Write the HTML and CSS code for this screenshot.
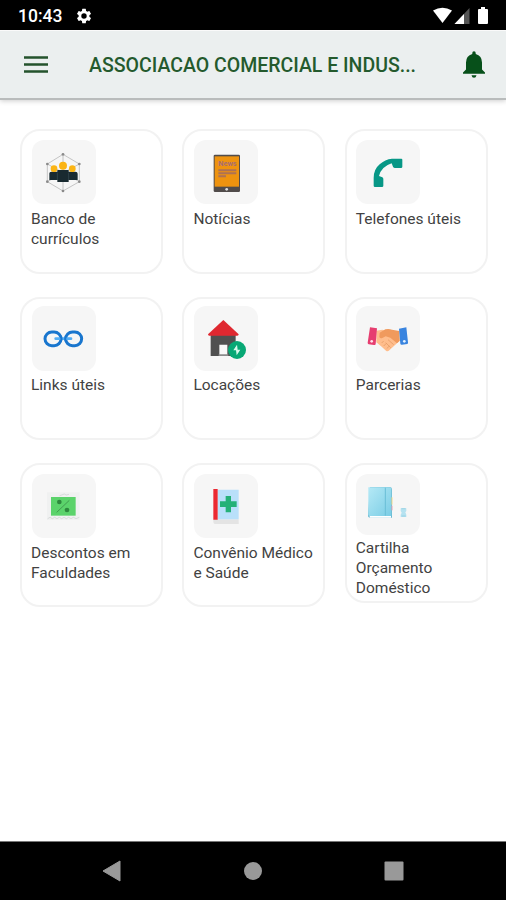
FILE: index.html
```html
<!DOCTYPE html>
<html lang="pt-BR">
<head>
  <meta charset="UTF-8" />
  <title>Associação Comercial</title>
  <meta name="viewport" content="width=device-width, initial-scale=1" />
  <link rel="stylesheet" href="styles.css">
</head>
<body>
  <div class="status-bar">
    <span class="clock">10:43</span>
    <svg class="gear" viewBox="0 0 24 24"><path fill="#fff" d="M19.14 12.94c.04-.3.06-.61.06-.94s-.02-.64-.07-.94l2.03-1.58a.49.49 0 0 0 .12-.61l-1.92-3.32a.49.49 0 0 0-.59-.22l-2.39.96a7 7 0 0 0-1.62-.94l-.36-2.54a.48.48 0 0 0-.48-.41h-3.84a.47.47 0 0 0-.47.41l-.36 2.54c-.59.24-1.13.57-1.62.94l-2.39-.96a.48.48 0 0 0-.59.22L2.74 8.87a.47.47 0 0 0 .12.61l2.03 1.58a7.8 7.8 0 0 0 0 1.88l-2.03 1.58a.49.49 0 0 0-.12.61l1.92 3.32c.12.22.37.29.59.22l2.39-.96c.5.38 1.03.7 1.62.94l.36 2.54c.05.24.24.41.48.41h3.84c.24 0 .44-.17.47-.41l.36-2.54a7 7 0 0 0 1.62-.94l2.39.96c.22.08.47 0 .59-.22l1.92-3.32a.47.47 0 0 0-.12-.61zM12 15.6a3.6 3.6 0 1 1 0-7.2 3.6 3.6 0 0 1 0 7.2z"/></svg>
    <svg class="signals" viewBox="0 0 60 18">
      <path fill="#fff" d="M1 3.500Q10.500-2 20 3.500L10.500 16z"/>
      <path fill="#555" d="M37.500 1v16H22.500z"/>
      <path fill="#fff" d="M32 7v10h-9.500z"/>
      <path fill="#fff" d="M49 0h4v2h2q1 0 1 1v13q0 1-1 1h-8q-1 0-1-1V3q0-1 1-1h2z"/>
    </svg>
  </div>

  <header class="header">
    <svg class="menu" viewBox="0 0 24 18"><path stroke="#24532c" stroke-width="2.500" d="M0 1.500h24M0 8.500h24M0 15.500h24"/></svg>
    <h1>ASSOCIACAO COMERCIAL E INDUS...</h1>
    <svg class="bell" viewBox="0 0 22 27"><path fill="#07501a" d="M9.300 3V2Q9.300.3 11 .3T12.700 2v1Q19 4.800 19 11.500v7l3 3v1.200H0v-1.200l3-3v-7Q3 4.800 9.300 3zM8.500 24.200h5q-.5 2.500-2.500 2.500t-2.500-2.500z"/></svg>
  </header>

  <main class="grid">
    <a class="card">
      <svg class="tile" viewBox="66 60 192 192">
        <path fill="none" stroke="#aaa" stroke-width="2" d="M159 103l49 29v53l-49 28-47-28v-53zM159 103v110M112 132l96 53M112 185l96-53"/>
        <g fill="#8a8a8a"><circle cx="159" cy="103" r="4"/><circle cx="208" cy="132" r="4"/><circle cx="208" cy="185" r="4"/><circle cx="159" cy="213" r="4"/><circle cx="112" cy="185" r="4"/><circle cx="112" cy="132" r="4"/></g>
        <path fill="#192a30" d="M118 160q0-5 6-5h18v-5h34v5h20q7 0 7 6v19h-27v6h-34v-6h-24z"/>
        <path stroke="#3b5057" stroke-width="2" d="M142 158v22M176 158v22"/>
        <g fill="#fbb414"><circle cx="159" cy="137" r="12"/><circle cx="132" cy="146" r="10"/><circle cx="187" cy="146" r="10"/></g>
      </svg>
      <span>Banco de currículos</span>
    </a>
    <a class="card">
      <svg class="tile" viewBox="55 60 192 192">
        <rect x="114" y="104" width="79" height="112" rx="4" fill="#514c4b"/>
        <rect x="117" y="109" width="73" height="91" fill="#ee930f"/>
        <text class="news" x="128" y="139" textLength="55" lengthAdjust="spacingAndGlyphs">News</text>
        <path stroke="#ae7254" stroke-width="6" d="M128 151h54M128 160h54M128 169h23"/>
        <circle cx="153" cy="208" r="4" fill="#ddd"/>
      </svg>
      <span>Notícias</span>
    </a>
    <a class="card">
      <svg class="tile" viewBox="55 60 192 192">
        <path fill="#079786" d="M163 116h28q3 0 3 3v21q0 4-4 4h-18q-4 0-6-4l-4-10q-31 10-38 38l10 4q3 2 3 5v20q0 4-4 4h-21q-4 0-4-4v-23q0-26 18-41 16-15 37-17z"/>
      </svg>
      <span>Telefones úteis</span>
    </a>

    <a class="card middle">
      <svg class="tile" viewBox="66 48 192 195">
        <g fill="none" stroke="#1976ce" stroke-width="9"><rect x="105" y="126" width="48" height="41" rx="20.500"/><rect x="167" y="126" width="48" height="41" rx="20.500"/></g>
        <path stroke="#53aef5" stroke-width="8" stroke-linecap="round" d="M137 146h46"/>
        <path fill="none" stroke="#1976ce" stroke-width="6" d="M152 139q5 8 0 15M168 139q-5 8 0 15"/>
      </svg>
      <span>Links úteis</span>
    </a>
    <a class="card middle">
      <svg class="tile" viewBox="55 48 192 195">
        <path fill="#505050" d="M105 132h75v66h-75z"/>
        <path fill="#f8f8f8" d="M131 164h24v34h-24z"/>
        <path fill="#8b8b8b" d="M129 193h29v5h-29z"/>
        <path fill="#df2830" d="M143 90l46 43q0 4-4 4h-84q-4 0-4-4z"/>
        <circle cx="184" cy="180" r="27" fill="#08a875"/>
        <path fill="#d8f8ec" d="M184 164l-11 17h8l2 15 11-17h-8z"/>
      </svg>
      <span>Locações</span>
    </a>
    <a class="card middle">
      <svg class="tile" viewBox="55 48 192 195">
        <path fill="#ffbd8c" d="M116 122l18-3 20 8 29-4 3 29-31 29q-5 5-10 1l-13-12-16-13z"/>
        <path fill="#f09a5d" d="M126 128l17-10q10-3 20 1l22 4 1 29-8 8-20-17-14-4-10 5q-7 2-9-3z"/>
        <path fill="none" stroke="#df955f" stroke-width="2" d="M132 159l6-6M138 168l8-8M147 176l8-8M159 173l-15-15M168 164l-17-15"/>
        <path fill="#e63e70" d="M97 112l21 3-4 47q0 4-5 3l-16-2q-3-1-3-5z"/>
        <path fill="#3984df" d="M206 112l-22 4 4 45q1 4 5 3l16-2q3-1 2-5z"/>
        <circle cx="102" cy="154" r="4" fill="#ffe1ea"/><circle cx="200" cy="154" r="4" fill="#e4f2ff"/>
      </svg>
      <span>Parcerias</span>
    </a>

    <a class="card">
      <svg class="tile" viewBox="66 57 192 192">
        <path fill="#f0f1f1" d="M111 112h98v83h-98z"/>
        <path fill="none" stroke="#ccd0d0" stroke-width="2" d="M149 122l14-5 6 3 8-2M113 191l7-4 7 4 7-4 7 4 7-4 7 4 7-4 7 4 7-4 7 4 7-4 8 4 10-4"/>
        <rect x="123" y="126" width="74" height="56" fill="#5bd36b"/>
        <path stroke="#429c51" stroke-width="3" d="M140 172l38-36"/>
        <circle cx="148" cy="141" r="7" fill="#2e893e"/><circle cx="171" cy="165" r="7" fill="#2e893e"/>
      </svg>
      <span>Descontos em Faculdades</span>
    </a>
    <a class="card">
      <svg class="tile" viewBox="55 57 192 192">
        <path fill="#e4e4e4" d="M113 193h76v14h-68q-8 0-8-7z"/>
        <path fill="#b9e0fa" d="M126 104h63v89h-63z"/>
        <path fill="#eb2932" d="M113 102h13v92h-13z"/>
        <path fill="#24b177" d="M150 123h16v16h17v17h-17v16h-16v-16h-17v-17h17z"/>
      </svg>
      <span>Convênio Médico e Saúde</span>
    </a>
    <a class="card compact">
      <svg class="tile" viewBox="55 57 192 183">
        <defs><linearGradient id="cover" x2="1" y2="1"><stop stop-color="#b5e9f6"/><stop offset="1" stop-color="#7acde5"/></linearGradient></defs>
        <path fill="#69b9d0" d="M97 96h60q6 1 6 8v84H96q-5-1-5-6z"/>
        <path fill="#fff" d="M96 183h64v5H96z"/>
        <path fill="url(#cover)" d="M92 97h65q4 1 4 5v81H96q-4 0-4-4z"/>
        <path stroke="#69bed7" stroke-width="3" d="M143 98v84"/>
        <path stroke="#f5d889" stroke-width="3" d="M163 127v22"/><path stroke="#e9a1b2" stroke-width="3" d="M163 152v14"/>
        <path fill="#b6e2f0" d="M189 160h17v8l-3 4 3 7v7h-17v-7l3-6-3-5z"/>
        <path stroke="#8bcce0" stroke-width="2" d="M191 161h13M192 183h12"/>
      </svg>
      <span>Cartilha Orçamento Doméstico</span>
    </a>
  </main>

  <nav class="nav-bar">
    <svg viewBox="0 0 20 22"><path fill="#999" d="M18 1v20L1 11z" stroke="#999" stroke-linejoin="round"/></svg>
    <svg viewBox="0 0 20 22"><circle cx="10" cy="11" r="9" fill="#999"/></svg>
    <svg viewBox="0 0 20 22"><rect x=".5" y="1.500" width="19" height="19" rx="1" fill="#999"/></svg>
  </nav>
</body>
</html>
```

FILE: styles.css
```css
* {
  box-sizing: border-box;
}
body {
  margin: 0;
  height: 900px;
  display: flex;
  flex-direction: column;
  overflow: hidden;
  font-family: Roboto, sans-serif;
  background: #fff;
  color: #424242;
}
svg {
  display: block;
  flex: none;
}
.status-bar {
  height: 30px;
  padding: 1px 14px 0 18px;
  display: flex;
  align-items: center;
  background: #000;
  color: #fff;
}
.clock {
  font-size: 17.5px;
  font-weight: 500;
  width: 57px;
}
.gear {
  width: 18px;
  height: 18px;
}
.signals {
  width: 60px;
  height: 18px;
  margin-left: auto;
}
.header {
  height: 70px;
  display: flex;
  align-items: center;
  padding: 0 21px 0 24px;
  background: #ebefef;
  border-top: 1px solid #fafafa;
  border-bottom: 2px solid #b9bcbc;
  box-shadow: 0 1px 5px rgba(0, 0, 0, 0.2);
}
.menu {
  width: 24px;
  height: 18px;
}
h1 {
  margin: 2px 0 0 41px;
  font-size: 19.5px;
  font-weight: 500;
  color: #245a2d;
  white-space: nowrap;
}
.bell {
  width: 22px;
  height: 27px;
  margin-left: auto;
}
.grid {
  flex: 1;
  display: grid;
  grid-template-columns: repeat(3, 143px);
  grid-template-rows: 145px 143px 144px;
  column-gap: 19.4px;
  row-gap: 23px;
  padding: 29px 0 0 20px;
}
.card {
  padding: 9px 6px 0 9.5px;
  border: 2px solid #f2f2f2;
  border-radius: 20px;
  font-size: 15.5px;
  line-height: 20px;
}
.card span {
  display: block;
  margin: 5px 0 0 -0.5px;
}
.tile {
  width: 64px;
  height: 64px;
  border-radius: 12px;
  background: #f6f6f6;
}
.news {
  font-size: 22px;
  font-weight: 700;
  fill: #a76e72;
}
.middle {
  padding-top: 7px;
}
.middle .tile {
  height: 65px;
}
.middle span {
  margin-top: 4px;
}
.compact {
  height: 140px;
}
.compact .tile {
  height: 61px;
}
.compact span {
  margin-top: 3px;
}
.nav-bar {
  height: 59px;
  padding: 0 102px;
  display: flex;
  align-items: center;
  justify-content: space-between;
  background: #000;
  border-top: 1px solid #777;
}
.nav-bar svg {
  width: 20px;
  height: 22px;
}
```
